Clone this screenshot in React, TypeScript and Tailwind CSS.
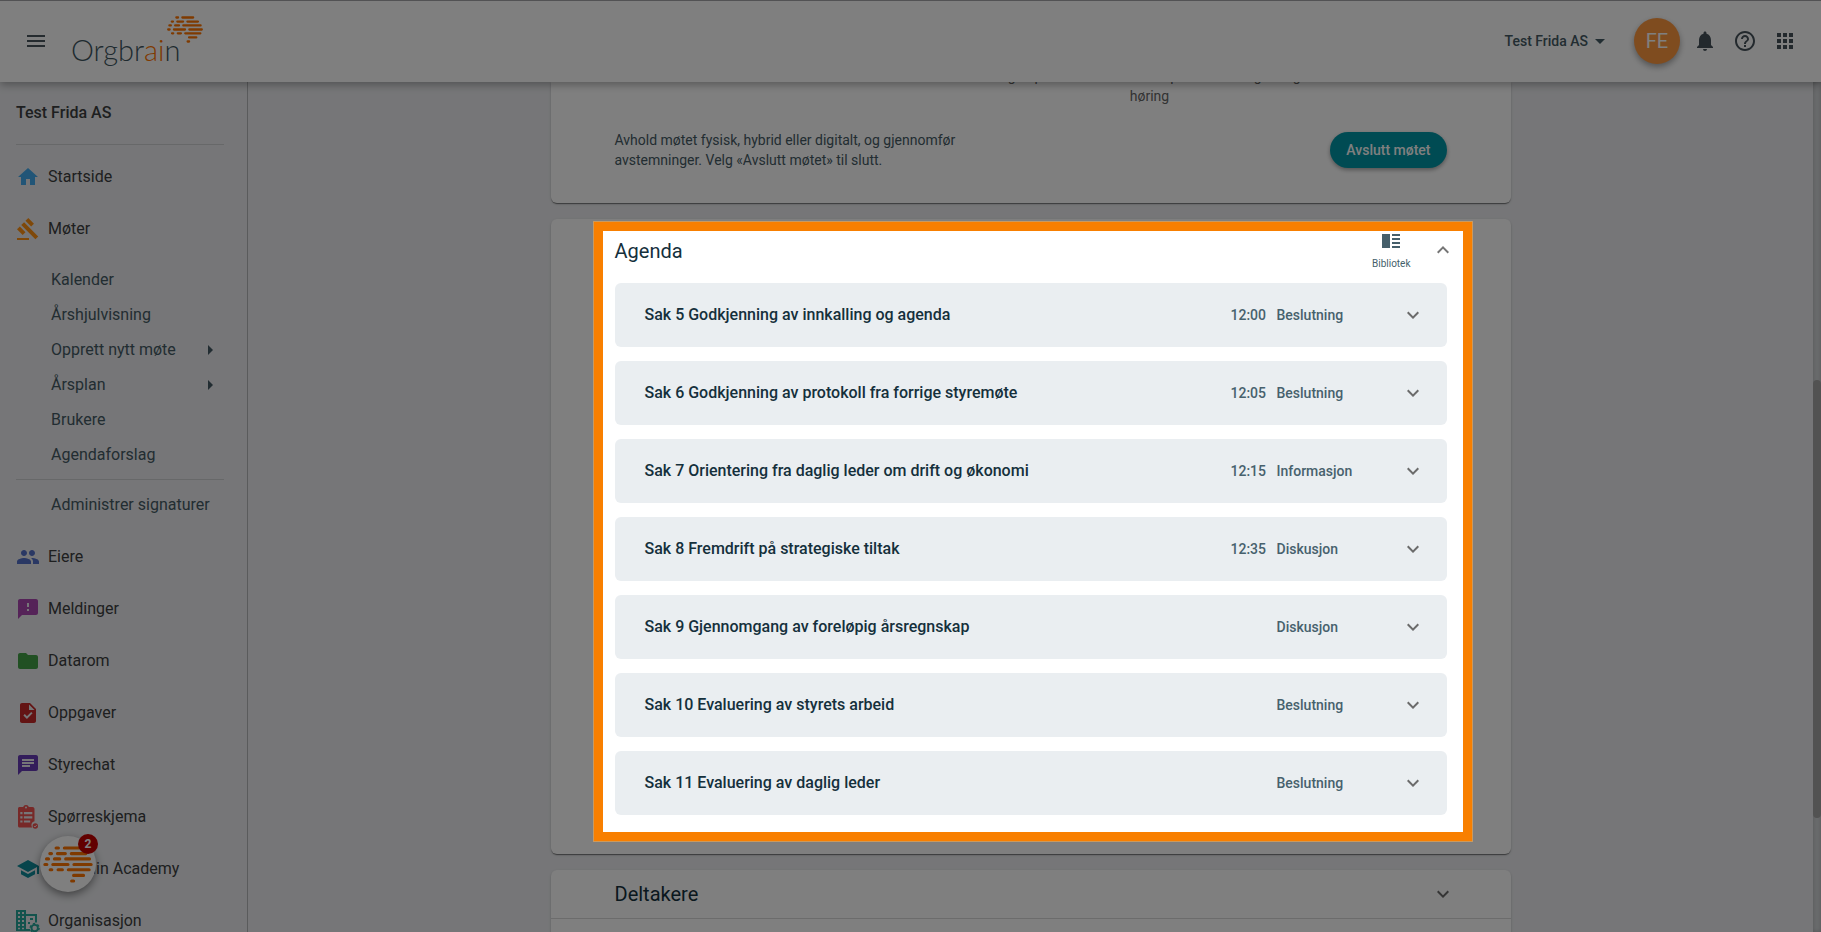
import type { ReactNode } from "react";
import {
  MdApps,
  MdArrowDropDown,
  MdArrowRight,
  MdChat,
  MdExpandLess,
  MdExpandMore,
  MdFeedback,
  MdFolder,
  MdGavel,
  MdHelpOutline,
  MdHome,
  MdMenu,
  MdNotifications,
  MdPeople,
  MdSchool,
  MdTask,
  MdVerticalSplit,
} from "react-icons/md";

const agenda = [
  { title: "Sak 5 Godkjenning av innkalling og agenda", time: "12:00", type: "Beslutning" },
  { title: "Sak 6 Godkjenning av protokoll fra forrige styremøte", time: "12:05", type: "Beslutning" },
  { title: "Sak 7 Orientering fra daglig leder om drift og økonomi", time: "12:15", type: "Informasjon" },
  { title: "Sak 8 Fremdrift på strategiske tiltak", time: "12:35", type: "Diskusjon" },
  { title: "Sak 9 Gjennomgang av foreløpig årsregnskap", time: "", type: "Diskusjon" },
  { title: "Sak 10 Evaluering av styrets arbeid", time: "", type: "Beslutning" },
  { title: "Sak 11 Evaluering av daglig leder", time: "", type: "Beslutning" },
];

const meetingLinks = [
  { label: "Kalender", nested: false },
  { label: "Årshjulvisning", nested: false },
  { label: "Opprett nytt møte", nested: true },
  { label: "Årsplan", nested: true },
  { label: "Brukere", nested: false },
  { label: "Agendaforslag", nested: false },
];

function BrainMark({ className }: { className: string }) {
  return (
    <svg viewBox="129 316 150 112" className={className} fill="none" stroke="#ff7400" strokeWidth="9.5" strokeLinecap="round" aria-hidden="true">
      <path d="M168 322h7M193 322h45M149 339h5M172 339h24M214 339h44M139 355h6M163 355h16M197 355h72M134 372h6M158 372h46M222 372h52M150 388h5M174 388h13M205 388h63M221 405h30M215 422h6" />
    </svg>
  );
}

function SurveyIcon() {
  return (
    <svg viewBox="0 0 24 24" className="size-6 shrink-0" aria-hidden="true">
      <path
        fill="#ef5350"
        fillRule="evenodd"
        d="M3.5 2h3.700C7.600.8 8.500 0 9.800 0h.4c1.300 0 2.200.8 2.600 2h3.700C17.600 2 18.500 2.900 18.500 4v12.300c-1.700.3-3.100 1.900-3.100 3.700 0 .9.300 1.700.8 2.400H3.500c-.8 0-1.500-.7-1.500-1.500V3.500C2 2.700 2.700 2 3.500 2zM10 1.600a1 1 0 100 2 1 1 0 000-2zM4.300 7v2.200h2.200V7zm3.600 0v2.200h8.400V7zM4.300 11.200v2.200h2.200v-2.200zm3.600 0v2.200h8.400v-2.200zM4.300 15.400v2.200h2.200v-2.200zm3.600 0v2.200h6.300v-2.200z"
      />
      <circle cx="19.300" cy="21" r="2.700" fill="#ef5350" />
      <path d="M18 21l1 1 1.800-2" fill="none" stroke="#ecedf0" strokeWidth=".9" />
    </svg>
  );
}

function OrganisationIcon() {
  return (
    <svg viewBox="0 0 24 24" className="size-6 shrink-0" aria-hidden="true">
      <path
        fill="#26a69a"
        fillRule="evenodd"
        d="M0 1h10v4h11v8.500h-2V7h-9v13h4v2H0zM2 3v2h2V3zm4 0v2h2V3zM2 7v2h2V7zm4 0v2h2V7zM2 11v2h2v-2zm4 0v2h2v-2zM2 15v2h2v-2zm4 0v2h2v-2zM2 18.800v1.500h2v-1.500zm4 0v1.500h2v-1.500zM14 9h3v2h-3zM12 13h2v2h-2z"
      />
      <circle cx="18.700" cy="19" r="3.200" fill="none" stroke="#26a69a" strokeWidth="1.800" />
      <circle cx="18.700" cy="19" r="4.400" fill="none" stroke="#26a69a" strokeWidth="1.500" strokeDasharray="2.300 2.300" />
    </svg>
  );
}

function NavItem({ icon, label }: { icon: ReactNode; label: string }) {
  return (
    <a href="#" className="flex h-[52px] items-center gap-2 text-[#3c3e40]">
      {icon}
      <span>{label}</span>
    </a>
  );
}

const cardClass =
  "rounded-md bg-white shadow-[0_2px_1px_-1px_rgba(0,0,0,0.3),0_1px_1px_rgba(0,0,0,0.2),0_1px_3px_rgba(0,0,0,0.14)]";

export default function App() {
  return (
    <div className="relative flex h-screen flex-col overflow-hidden bg-[#ecedf0] font-['Roboto',sans-serif] text-[#455a64]">
      <header className="relative z-10 flex h-[82px] shrink-0 items-center border-t border-[#a5a5a8] bg-white px-6 pb-0.5 shadow-[0_3px_8px_rgba(0,0,0,0.3)]">
        <button aria-label="Meny" className="text-[#4b565e]">
          <MdMenu className="size-6" />
        </button>
        <a href="#" aria-label="Orgbrain" className="relative ml-[23px] pt-[18px] font-['Lato',sans-serif] text-[29px] leading-9 font-light text-[#3f5661]">
          Orgbr<span className="text-[#ff7400]">ai</span>n
          <BrainMark className="absolute top-[2px] left-24 h-[27px] w-9" />
        </a>
        <button className="ml-auto flex items-center text-sm font-medium">
          Test Frida AS
          <MdArrowDropDown className="size-6" />
        </button>
        <button className="ml-[22px] flex size-[46px] items-center justify-center rounded-full bg-[#ff983f] text-xl text-white shadow-[0_3px_6px_rgba(0,0,0,0.35)]">
          FE
        </button>
        <div className="ml-[13px] flex gap-4 text-[#47535b]">
          <button aria-label="Varsler">
            <MdNotifications className="size-6" />
          </button>
          <button aria-label="Hjelp">
            <MdHelpOutline className="size-6" />
          </button>
          <button aria-label="Apper">
            <MdApps className="size-6" />
          </button>
        </div>
      </header>

      <div className="flex min-h-0 flex-1">
        <nav className="w-62 shrink-0 border-r border-[#b4b6b9] pr-[23px] pl-4">
          <h2 className="flex h-[63px] items-center border-b border-[#ced0d3] font-medium text-[#3c3e40]">Test Frida AS</h2>
          <div className="pt-1.5">
            <NavItem icon={<MdHome className="size-6 text-[#42abee]" />} label="Startside" />
            <NavItem icon={<MdGavel className="size-6 text-[#ff9112]" />} label="Møter" />
          </div>
          <ul className="border-b border-[#ced0d3] py-[7px] pr-0.5 pl-[35px]">
            {meetingLinks.map((link) => (
              <li key={link.label}>
                <a href="#" className="flex h-[35px] items-center justify-between">
                  {link.label}
                  {link.nested && <MdArrowRight className="size-6" />}
                </a>
              </li>
            ))}
          </ul>
          <a href="#" className="mt-[7px] mb-[9px] flex h-[35px] items-center pl-[35px] whitespace-nowrap">
            Administrer signaturer
          </a>
          <NavItem icon={<MdPeople className="size-6 text-[#5470c8]" />} label="Eiere" />
          <NavItem icon={<MdFeedback className="size-6 text-[#ab47b0]" />} label="Meldinger" />
          <NavItem icon={<MdFolder className="size-6 text-[#43a047]" />} label="Datarom" />
          <NavItem icon={<MdTask className="size-6 text-[#c62828]" />} label="Oppgaver" />
          <NavItem icon={<MdChat className="size-6 text-[#673ab7]" />} label="Styrechat" />
          <NavItem icon={<SurveyIcon />} label="Spørreskjema" />
          <NavItem icon={<MdSchool className="size-6 text-[#0f8a99]" />} label="Orgbrain Academy" />
          <NavItem icon={<OrganisationIcon />} label="Organisasjon" />
        </nav>

        <main className="min-w-0 flex-1">
          <div className="mx-auto flex max-w-[960px] flex-col gap-4">
            <section className={`${cardClass} rounded-t-none px-16 pb-[33px]`}>
              <p className="-mt-4 ml-[375px] w-80 text-center text-sm leading-5 text-[#666]">
                Lag et protokollutkast. Send protokoll til signering/ høring
              </p>
              <div className="mt-6 flex items-center justify-between">
                <p className="max-w-[360px] text-sm leading-5">
                  Avhold møtet fysisk, hybrid eller digitalt, og gjennomfør avstemninger. Velg «Avslutt møtet» til slutt.
                </p>
                <button className="h-9 rounded-full bg-[#0097a7] px-4 text-sm font-medium text-white shadow-[0_2px_4px_rgba(0,0,0,0.35)]">
                  Avslutt møtet
                </button>
              </div>
            </section>

            <section className={`${cardClass} relative px-16 pb-[39px]`}>
              <div className="flex h-16 items-center justify-between">
                <h2 className="text-xl text-[#15303c]">Agenda</h2>
                <div className="-mr-2 flex items-center gap-5 pb-0.5">
                  <button className="flex flex-col items-center gap-[3px] text-[10px] leading-4 text-[#455f6b]">
                    <MdVerticalSplit className="size-6 -scale-x-100" />
                    Bibliotek
                  </button>
                  <button aria-label="Skjul agenda" className="text-[#757575]">
                    <MdExpandLess className="size-6" />
                  </button>
                </div>
              </div>
              <ul className="flex flex-col gap-3.5">
                {agenda.map((item) => (
                  <li key={item.title} className="flex h-16 items-center rounded-md bg-[#eaeef1] pr-[22px] pl-[30px]">
                    <h3 className="flex-1 font-medium text-[#15303c]">{item.title}</h3>
                    <span className="w-[46px] text-sm font-medium text-[#47616d]">{item.time}</span>
                    <span className="w-[124px] text-sm font-medium text-[#47616d]">{item.type}</span>
                    <button aria-label={`Vis ${item.title}`} className="text-[#6b6b6b]">
                      <MdExpandMore className="size-6" />
                    </button>
                  </li>
                ))}
              </ul>
              {/* Spotlight: frames the agenda and dims the rest of the page */}
              <div className="pointer-events-none absolute top-0.5 right-[38px] bottom-3 left-[42px] z-30 border-10 border-[#f87f00] shadow-[0_0_0_4000px_rgba(0,0,0,0.5)] outline -outline-offset-1 outline-[#c99a60]" />
            </section>

            <section className={cardClass}>
              <div className="flex h-[49px] items-center justify-between border-b border-[#d8d8d8] pr-14 pl-16">
                <h2 className="text-xl text-[#15303c]">Deltakere</h2>
                <button aria-label="Vis deltakere" className="text-[#6b6b6b]">
                  <MdExpandMore className="size-6" />
                </button>
              </div>
              <div className="h-24" />
            </section>
          </div>
        </main>

        <div className="w-2 shrink-0 bg-[#d4d7da] pt-[298px] shadow-[inset_0_0_4px_rgba(0,0,0,0.2)]">
          <div className="h-[438px] rounded bg-[#a4a4a4]" />
        </div>
      </div>

      <button
        aria-label="Åpne hjelpesenter, 2 nye"
        className="absolute bottom-10 left-10 z-20 flex size-14 items-center justify-center rounded-full bg-white shadow-[0_3px_8px_rgba(0,0,0,0.45)]"
      >
        <BrainMark className="h-[37px] w-[50px]" />
        <span className="absolute -top-0.5 -right-0.5 flex size-5 items-center justify-center rounded-full bg-[#c40000] text-xs font-bold text-white">
          2
        </span>
      </button>
    </div>
  );
}
